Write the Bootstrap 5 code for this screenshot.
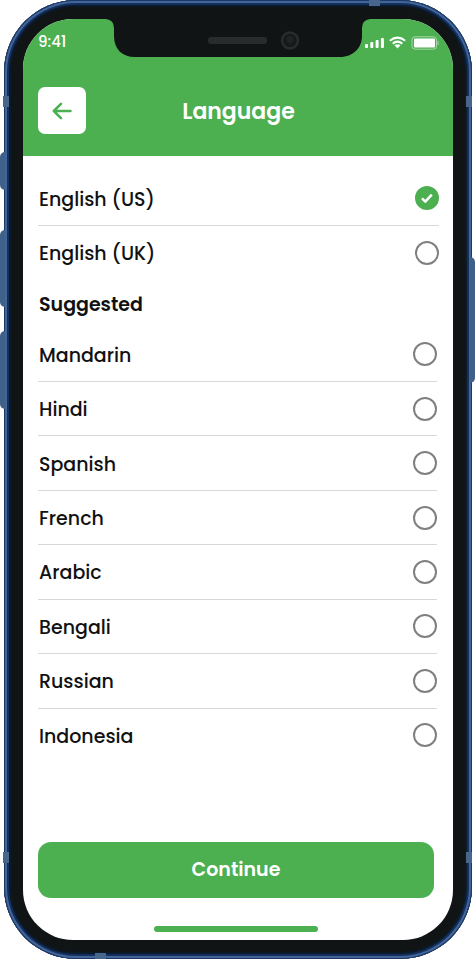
<!DOCTYPE html>
<html lang="en">
<head>
<meta charset="utf-8">
<meta name="viewport" content="width=device-width, initial-scale=1">
<title>Language</title>
<link href="https://cdn.jsdelivr.net/npm/bootstrap@5.3.0/dist/css/bootstrap.min.css" rel="stylesheet">
<style>
  :root { --leaf: #4caf50; --steel: #3f6088; }
  body { font-family: Poppins, Inter, sans-serif; background: #fff; color: #111; }
  .device { padding: 0 4px; }
  .frame {
    border-radius: 72px; background: #111414; padding: 19px; 
    box-shadow: inset 0 0 0 1px #1b3763, inset 0 0 0 3px #42659a, inset 0 0 0 5px #152f5c, inset 0 0 0 7px #0b1a2a;
  }
  .screen { border-radius: 50px; background: #fff; }
  .side-key { background: var(--steel); width: 5px; }
  .key-mute { top: 152px; height: 38px; left: 0; }
  .key-up { top: 230px; height: 77px; left: 0; }
  .key-down { top: 331px; height: 78px; left: 0; }
  .key-power { top: 257px; height: 126px; right: 1px; }
  .band { background: #48668c; width: 6px; height: 11px; }
  .band-h { width: 11px; height: 6px; }
  .band-hi { top: 96px; }
  .band-lo { bottom: 96px; }
  .band-l { left: 3px; }
  .band-r { right: 4px; }
  .band-top { top: 0; right: 96px; }
  .band-bottom { bottom: 0; left: 95px; }
  .app-header { background: var(--leaf); color: #fff; padding: 0 16px 22px 15px; }
  .status { height: 47px; font-size: 15px; font-weight: 500; }
  .title-bar { display: grid; grid-template-columns: 48px 1fr 48px; margin-top: 21px; }
  .title-bar h1 { font-size: 22px; line-height: 28px; font-weight: 600; padding: 2px 0 0 2px; }
  .back-btn { width: 48px; height: 47px; border-radius: 7px; background: #fff; }
  .back-btn:hover { background: #f1f8f1; }
  .langs { padding: 15px 14px 0 15px; }
  .langs-more { padding-right: 16px; }
  .lang-row { min-height: 54px; font-size: 19px; line-height: 28px; font-weight: 500; }
  .lang-row label { padding: 3px 0 0 1px; }
  .lang-row + .lang-row { border-top: 1px solid #d8d8d8; }
  .group-title { font-size: 19px; line-height: 44px; font-weight: 600; padding: 4px 0 0 16px; }
  .lang-row .form-check-input { width: 24px; height: 24px; border: 2px solid #808080; background-color: #fff; }
  .lang-row .form-check-input:checked {
    border-color: var(--leaf); background-color: var(--leaf); background-size: 24px 24px;
    background-image: url("data:image/svg+xml,%3Csvg xmlns='http://www.w3.org/2000/svg' viewBox='0 0 24 24'%3E%3Cpath d='M7 12.4l3.3 3.2 6.5-7' fill='none' stroke='white' stroke-width='2.5' stroke-linejoin='round'/%3E%3C/svg%3E");
  }
  .actions { padding: 80px 19px 8px 15px; }
  .continue-btn { height: 56px; border-radius: 13px; background: var(--leaf); color: #fff; font-size: 19px; line-height: 28px; font-weight: 600; }
  .continue-btn:hover { background: #43a047; color: #fff; }
  .home-bar { width: 164px; height: 6px; background: var(--leaf); margin-top: 28px; }
</style>
<script src="https://cdn.jsdelivr.net/npm/bootstrap@5.3.0/dist/js/bootstrap.bundle.min.js"></script>
</head>
<body>
<div class="device position-relative min-vh-100 d-flex flex-column">
  <span class="side-key key-mute position-absolute rounded-start"></span>
  <span class="side-key key-up position-absolute rounded-start"></span>
  <span class="side-key key-down position-absolute rounded-start"></span>
  <span class="side-key key-power position-absolute rounded-end"></span>
  <div class="frame flex-fill d-flex flex-column">
    <main class="screen position-relative overflow-hidden flex-fill d-flex flex-column">
      <!-- Camera notch -->
      <svg class="position-absolute top-0 start-50 translate-middle-x" width="264" height="39" viewBox="0 0 264 39" aria-hidden="true">
        <path d="M0 0Q8 1 8 9V17C8 30 16 38 29 38H234C247 38 256 29 256 17V9Q256 1 264 0Z" fill="#111414"/>
        <rect x="102" y="18" width="59" height="7" rx="3" fill="#292c2c"/>
        <circle cx="184" cy="21.500" r="8" fill="#171a1a" stroke="#292c2c" stroke-width="2.500"/>
        <circle cx="184" cy="20.500" r="3.500" fill="#202424"/>
      </svg>
      <header class="app-header">
        <div class="status d-flex align-items-center justify-content-between">
          <span>9:41</span>
          <svg class="overflow-visible" width="72" height="16" viewBox="0 0 72 16" aria-hidden="true">
            <g fill="#fff">
              <rect x="0" y="9" width="3" height="4" rx="1"/>
              <rect x="5.300" y="7" width="3" height="6" rx="1"/>
              <rect x="10.600" y="5" width="3" height="8" rx="1"/>
              <rect x="15.900" y="3" width="3" height="10" rx="1"/>
              <path d="M29.500 10.300Q32.500 8.100 35.500 10.300L32.500 13.500Z"/>
              <rect x="49" y="3.500" width="21" height="9" rx="1"/>
            </g>
            <path d="M24.800 5.700Q32.500-.5 40.200 5.700M27.700 8.600Q32.500 4.700 37.300 8.600" fill="none" stroke="#fff" stroke-width="2"/>
            <rect x="47" y="1.800" width="24.500" height="12.400" rx="3" fill="none" stroke="#fff" stroke-opacity=".5"/>
            <path d="M73 6v4" stroke="#fff" stroke-opacity=".5"/>
          </svg>
        </div>
        <div class="title-bar align-items-center">
          <button type="button" class="back-btn btn border-0 p-0 d-flex align-items-center justify-content-center" aria-label="Back">
            <svg width="20" height="18" viewBox="0 0 20 18" fill="none" stroke="#4caf50" stroke-width="2.500" stroke-linecap="round" stroke-linejoin="round" aria-hidden="true"><path d="M18.500 9H1.800M9 1.800L1.800 9L9 16.200"/></svg>
          </button>
          <h1 class="text-center mb-0">Language</h1>
        </div>
      </header>
      <form class="flex-fill d-flex flex-column">
        <div class="langs">
          <div class="lang-row d-flex align-items-center justify-content-between"><label for="en-us">English (US)</label><input class="form-check-input m-0" type="radio" name="lang" id="en-us" checked></div>
          <div class="lang-row d-flex align-items-center justify-content-between"><label for="en-uk">English (UK)</label><input class="form-check-input m-0" type="radio" name="lang" id="en-uk"></div>
        </div>
        <h2 class="group-title mb-0">Suggested</h2>
        <div class="langs langs-more pt-0 flex-fill d-flex flex-column">
          <div class="lang-row flex-fill d-flex align-items-center justify-content-between"><label for="zh">Mandarin</label><input class="form-check-input m-0" type="radio" name="lang" id="zh"></div>
          <div class="lang-row flex-fill d-flex align-items-center justify-content-between"><label for="hi">Hindi</label><input class="form-check-input m-0" type="radio" name="lang" id="hi"></div>
          <div class="lang-row flex-fill d-flex align-items-center justify-content-between"><label for="es">Spanish</label><input class="form-check-input m-0" type="radio" name="lang" id="es"></div>
          <div class="lang-row flex-fill d-flex align-items-center justify-content-between"><label for="fr">French</label><input class="form-check-input m-0" type="radio" name="lang" id="fr"></div>
          <div class="lang-row flex-fill d-flex align-items-center justify-content-between"><label for="ar">Arabic</label><input class="form-check-input m-0" type="radio" name="lang" id="ar"></div>
          <div class="lang-row flex-fill d-flex align-items-center justify-content-between"><label for="bn">Bengali</label><input class="form-check-input m-0" type="radio" name="lang" id="bn"></div>
          <div class="lang-row flex-fill d-flex align-items-center justify-content-between"><label for="ru">Russian</label><input class="form-check-input m-0" type="radio" name="lang" id="ru"></div>
          <div class="lang-row flex-fill d-flex align-items-center justify-content-between"><label for="id">Indonesia</label><input class="form-check-input m-0" type="radio" name="lang" id="id"></div>
        </div>
        <div class="actions">
          <button type="submit" class="continue-btn btn w-100 border-0">Continue</button>
          <div class="home-bar rounded-pill mx-auto"></div>
        </div>
      </form>
    </main>
  </div>
  <span class="band band-hi band-l position-absolute"></span>
  <span class="band band-hi band-r position-absolute"></span>
  <span class="band band-lo band-l position-absolute"></span>
  <span class="band band-lo band-r position-absolute"></span>
  <span class="band band-h band-top position-absolute"></span>
  <span class="band band-h band-bottom position-absolute"></span>
</div>
</body>
</html>
